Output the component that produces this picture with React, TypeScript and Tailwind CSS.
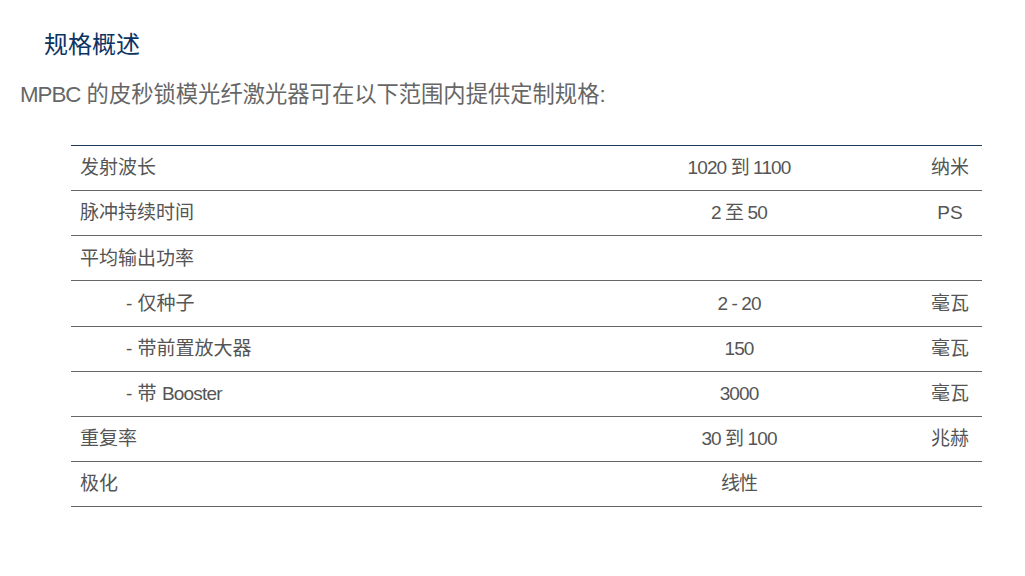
import React from "react";

const rows: { label: React.ReactNode; indent?: boolean; value: string; unit: string }[] = [
  { label: "发射波长", value: "1020 到 1100", unit: "纳米" },
  { label: "脉冲持续时间", value: "2 至 50", unit: "PS" },
  { label: "平均输出功率", value: "", unit: "" },
  { label: "- 仅种子", indent: true, value: "2 - 20", unit: "毫瓦" },
  { label: "- 带前置放大器", indent: true, value: "150", unit: "毫瓦" },
  { label: <>- 带 <span className="tracking-[-0.8px]">Booster</span></>, indent: true, value: "3000", unit: "毫瓦" },
  { label: "重复率", value: "30 到 100", unit: "兆赫" },
  { label: "极化", value: "线性", unit: "" },
];

export default function App() {
  return (
    <div
      className="w-[1025px] h-[576px] bg-white"
      style={{ fontFamily: '"Liberation Sans Narrow", "Liberation Sans", "Noto Sans CJK SC", sans-serif' }}
    >
      <div className="pt-[30px] pl-[44px] text-[24px] leading-[30px] text-[#0b3365]">规格概述</div>
      <div className="pt-[20px] pl-[20px] text-[22.3px] leading-[30px] text-[#666666]">
        <span className="tracking-[-1px]">MPBC</span> 的皮秒锁模光纤激光器可在以下范围内提供定制规格:
      </div>
      <div className="mt-[35px] ml-[71px] w-[911px] border-t border-[#1e3a5f]">
        {rows.map((r, i) => (
          <div key={i} className="flex h-[45.15px] items-center pt-[1px] border-b border-[#666666] text-[19px] text-[#555555]">
            <div className={"w-[489px] " + (r.indent ? "pl-[55px]" : "pl-[9px]")}>{r.label}</div>
            <div className="w-[358px] text-center tracking-[-0.9px]">{r.value}</div>
            <div className="w-[64px] text-center">{r.unit}</div>
          </div>
        ))}
      </div>
    </div>
  );
}
